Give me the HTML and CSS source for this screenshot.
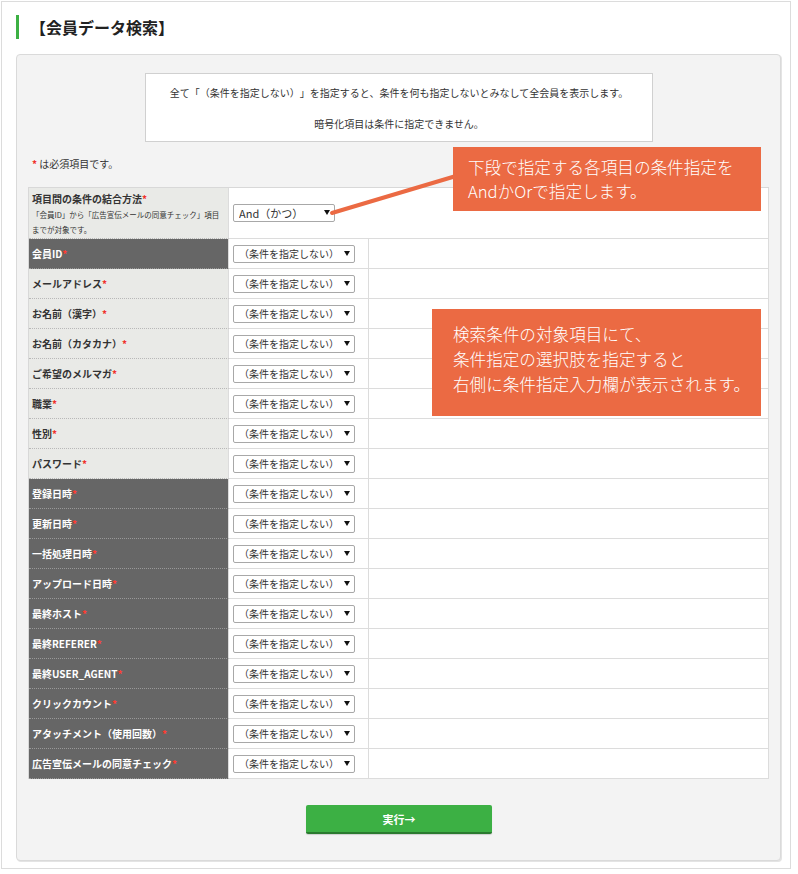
FILE: index.html
```html
<!DOCTYPE html>
<html lang="ja">
<head>
    <meta charset="UTF-8">
    <meta name="viewport" content="width=device-width, initial-scale=1.0">
    <title>会員データ検索</title>
    <link rel="stylesheet" href="styles.css">
</head>
<body>
    <div class="page">
        <h1 class="page-title">【会員データ検索】</h1>

        <div class="panel">
            <div class="info-box">
                <p>全て「（条件を指定しない）」を指定すると、条件を何も指定しないとみなして全会員を表示します。</p>
                <p>暗号化項目は条件に指定できません。</p>
            </div>

            <p class="note"><span class="req">*</span> は必須項目です。</p>

            <table class="search-table">
                <colgroup>
                    <col class="col-label">
                    <col class="col-select">
                    <col>
                </colgroup>
                <tr class="join-row">
                    <td class="label light">
                        項目間の条件の結合方法<span class="req">*</span>
                        <span class="sub">「会員ID」から「広告宣伝メールの同意チェック」項目<br>までが対象です。</span>
                    </td>
                    <td class="cell" colspan="2">
                        <span class="select-wrap short"><select><option>And（かつ）</option><option>Or（または）</option></select></span>
                    </td>
                </tr>
                <tr>
                    <td class="label dark">会員ID<span class="req">*</span></td>
                    <td class="cell"><span class="select-wrap"><select><option>（条件を指定しない）</option></select></span></td>
                    <td class="cell"></td>
                </tr>
                <tr>
                    <td class="label light">メールアドレス<span class="req">*</span></td>
                    <td class="cell"><span class="select-wrap"><select><option>（条件を指定しない）</option></select></span></td>
                    <td class="cell"></td>
                </tr>
                <tr>
                    <td class="label light">お名前（漢字）<span class="req">*</span></td>
                    <td class="cell"><span class="select-wrap"><select><option>（条件を指定しない）</option></select></span></td>
                    <td class="cell"></td>
                </tr>
                <tr>
                    <td class="label light">お名前（カタカナ）<span class="req">*</span></td>
                    <td class="cell"><span class="select-wrap"><select><option>（条件を指定しない）</option></select></span></td>
                    <td class="cell"></td>
                </tr>
                <tr>
                    <td class="label light">ご希望のメルマガ<span class="req">*</span></td>
                    <td class="cell"><span class="select-wrap"><select><option>（条件を指定しない）</option></select></span></td>
                    <td class="cell"></td>
                </tr>
                <tr>
                    <td class="label light">職業<span class="req">*</span></td>
                    <td class="cell"><span class="select-wrap"><select><option>（条件を指定しない）</option></select></span></td>
                    <td class="cell"></td>
                </tr>
                <tr>
                    <td class="label light">性別<span class="req">*</span></td>
                    <td class="cell"><span class="select-wrap"><select><option>（条件を指定しない）</option></select></span></td>
                    <td class="cell"></td>
                </tr>
                <tr>
                    <td class="label light">パスワード<span class="req">*</span></td>
                    <td class="cell"><span class="select-wrap"><select><option>（条件を指定しない）</option></select></span></td>
                    <td class="cell"></td>
                </tr>
                <tr>
                    <td class="label dark">登録日時<span class="req">*</span></td>
                    <td class="cell"><span class="select-wrap"><select><option>（条件を指定しない）</option></select></span></td>
                    <td class="cell"></td>
                </tr>
                <tr>
                    <td class="label dark">更新日時<span class="req">*</span></td>
                    <td class="cell"><span class="select-wrap"><select><option>（条件を指定しない）</option></select></span></td>
                    <td class="cell"></td>
                </tr>
                <tr>
                    <td class="label dark">一括処理日時<span class="req">*</span></td>
                    <td class="cell"><span class="select-wrap"><select><option>（条件を指定しない）</option></select></span></td>
                    <td class="cell"></td>
                </tr>
                <tr>
                    <td class="label dark">アップロード日時<span class="req">*</span></td>
                    <td class="cell"><span class="select-wrap"><select><option>（条件を指定しない）</option></select></span></td>
                    <td class="cell"></td>
                </tr>
                <tr>
                    <td class="label dark">最終ホスト<span class="req">*</span></td>
                    <td class="cell"><span class="select-wrap"><select><option>（条件を指定しない）</option></select></span></td>
                    <td class="cell"></td>
                </tr>
                <tr>
                    <td class="label dark">最終REFERER<span class="req">*</span></td>
                    <td class="cell"><span class="select-wrap"><select><option>（条件を指定しない）</option></select></span></td>
                    <td class="cell"></td>
                </tr>
                <tr>
                    <td class="label dark">最終USER_AGENT<span class="req">*</span></td>
                    <td class="cell"><span class="select-wrap"><select><option>（条件を指定しない）</option></select></span></td>
                    <td class="cell"></td>
                </tr>
                <tr>
                    <td class="label dark">クリックカウント<span class="req">*</span></td>
                    <td class="cell"><span class="select-wrap"><select><option>（条件を指定しない）</option></select></span></td>
                    <td class="cell"></td>
                </tr>
                <tr>
                    <td class="label dark">アタッチメント（使用回数）<span class="req">*</span></td>
                    <td class="cell"><span class="select-wrap"><select><option>（条件を指定しない）</option></select></span></td>
                    <td class="cell"></td>
                </tr>
                <tr>
                    <td class="label dark">広告宣伝メールの同意チェック<span class="req">*</span></td>
                    <td class="cell"><span class="select-wrap"><select><option>（条件を指定しない）</option></select></span></td>
                    <td class="cell"></td>
                </tr>
            </table>

            <button class="run-button" type="button">実行→</button>

            <!-- 説明用の吹き出し -->
            <svg class="callout-line" width="140" height="50" viewBox="0 0 140 50">
                <line x1="136" y1="7" x2="12" y2="44" stroke="#eb6a43" stroke-width="4" stroke-linecap="round"/>
            </svg>
            <div class="callout callout-join">下段で指定する各項目の条件指定を<br>AndかOrで指定します。</div>
            <div class="callout callout-items">検索条件の対象項目にて、<br>条件指定の選択肢を指定すると<br>右側に条件指定入力欄が表示されます。</div>
        </div>
    </div>
</body>
</html>
```

FILE: styles.css
```css
body {
    margin: 0;
    background: #fff;
    color: #333;
    font-family: "Noto Sans CJK JP", "Noto Sans", sans-serif;
    text-spacing-trim: space-all;
}

.page {
    width: 765px;
    height: 866px;
    margin: 1px;
    padding: 0 9px 0 14px;
    border: 1px solid #dcdcdc;
}

.page-title {
    margin: 13px 0 15px;
    padding-left: 11px;
    border-left: 3px solid #3cb043;
    font-size: 16px;
    line-height: 24px;
    font-weight: bold;
    color: #222;
}

.panel {
    position: relative;
    padding: 18px 10px 26px 11px;
    background: #f3f3f3;
    border: 1px solid #dadada;
    border-radius: 4px;
    box-shadow: 1px 1px 0 #e4e4e4;
}

.info-box {
    width: 506px;
    margin: 0 auto;
    padding: 11px 0 9px;
    background: #fff;
    border: 1px solid #d0d0d0;
    text-align: center;
    font-size: 10px;
    line-height: 16px;
}

.info-box p {
    margin: 0;
}

.info-box p + p {
    margin-top: 15px;
}

.note {
    margin: 14px 0 15px 4px;
    font-size: 10px;
    line-height: 16px;
}

.req {
    color: #f0302a;
    font-weight: bold;
}

.search-table {
    width: 741px;
    table-layout: fixed;
    border-collapse: separate;
    border-spacing: 0;
    border-top: 1px solid #d8d8d8;
    border-left: 1px solid #d8d8d8;
    background: #fff;
}

.col-label {
    width: 200px;
}

.col-select {
    width: 140px;
}

.search-table td {
    height: 29px;
    padding: 0;
    border-right: 1px solid #dcdcdc;
    border-bottom: 1px solid #dcdcdc;
    vertical-align: middle;
}

.search-table .label {
    padding-left: 3px;
    font-size: 10px;
    font-weight: bold;
    line-height: 16px;
    white-space: nowrap;
}

.label.light {
    background: #e9eae7;
    color: #333;
    border-bottom: 1px dotted #b8b8b8;
}

.label.dark {
    background: #666;
    color: #fff;
    border-bottom: 1px dotted #999;
}

.label.dark .req {
    color: #ff3b30;
}

.search-table .join-row td {
    height: auto;
}

.join-row .label {
    padding: 3px 0 1px 3px;
    vertical-align: top;
}

.sub {
    display: block;
    font-size: 7.5px;
    font-weight: normal;
    line-height: 15px;
}

.cell {
    padding-left: 4px !important;
}

.select-wrap {
    position: relative;
    display: block;
    width: 122px;
}

.select-wrap.short {
    width: 102px;
}

.select-wrap::after {
    content: "";
    position: absolute;
    right: 5px;
    top: 6px;
    border-left: 3px solid transparent;
    border-right: 3px solid transparent;
    border-top: 5px solid #111;
    pointer-events: none;
}

.select-wrap select {
    display: block;
    width: 100%;
    height: 18px;
    margin: 0;
    padding: 0 12px 0 5px;
    border: 1px solid #a8a8a8;
    border-radius: 2px;
    background: #fff;
    color: #333;
    font-family: "Noto Sans CJK JP", "Noto Sans", sans-serif;
    font-size: 10px;
    line-height: 16px;
    appearance: none;
    -webkit-appearance: none;
}

.select-wrap.short select {
    font-size: 11px;
}

.run-button {
    display: block;
    width: 186px;
    height: 29px;
    margin: 26px auto 0;
    padding: 0;
    border: none;
    border-bottom: 2px solid #2a7a2f;
    border-radius: 2px;
    background: #3cb044;
    color: #fff;
    font-family: "Noto Sans CJK JP", "Noto Sans", sans-serif;
    font-size: 11px;
    font-weight: bold;
    box-shadow: 0 1px 1px rgba(0, 0, 0, 0.15);
    cursor: pointer;
}

.run-button:hover {
    background: #35a23d;
}

.callout {
    position: absolute;
    background: #eb6a43;
    color: #fff;
    font-size: 16.6px;
    font-weight: 300;
    white-space: nowrap;
}

.callout-join {
    left: 436px;
    top: 92px;
    width: 293px;
    height: 48px;
    padding: 8px 0 8px 15px;
    line-height: 24px;
}

.callout-items {
    left: 415px;
    top: 254px;
    width: 308px;
    height: 75px;
    padding: 13px 0 19px 21px;
    line-height: 25px;
}

.callout-line {
    position: absolute;
    left: 303px;
    top: 114px;
}
```
